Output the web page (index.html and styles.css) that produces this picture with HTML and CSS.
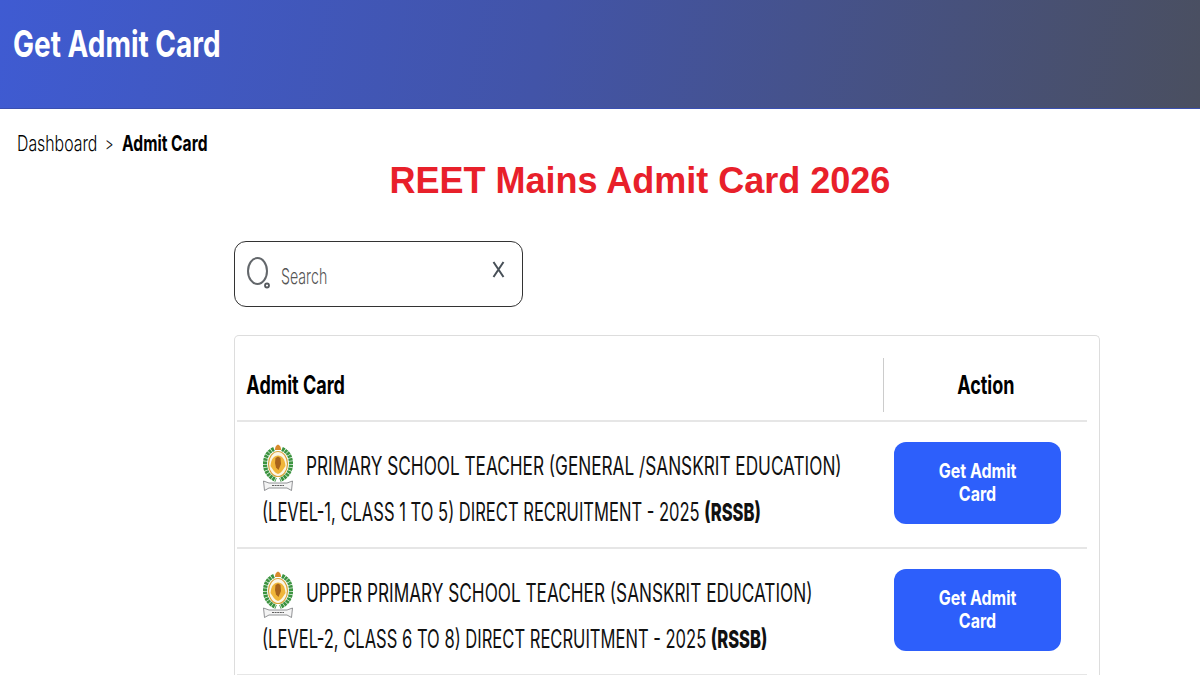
FILE: index.html
```html
<!DOCTYPE html>
<html>

<head>
    <title>Get Admit Card</title>
    <link rel="stylesheet" href="styles.css">
</head>

<body>
<header class="header">
    <div class="header-title squeeze">Get Admit Card</div>
</header>

<nav class="crumbs">
    <span class="crumb squeeze">Dashboard</span>
    <span class="crumb-sep squeeze">&gt;</span>
    <span class="crumb-now squeeze">Admit Card</span>
</nav>

<h1 class="title">REET Mains Admit Card 2026</h1>

<main class="content">
    <div class="search">
        <svg class="search-icon" width="24" height="34" viewBox="0 0 24 34">
            <ellipse cx="10.5" cy="15" rx="9.5" ry="13" fill="none" stroke="#63676b" stroke-width="2"/>
            <circle cx="20" cy="29.5" r="2" fill="none" stroke="#55595d" stroke-width="1.8"/>
        </svg>
        <span class="search-text squeeze">Search</span>
        <svg class="search-clear" width="13" height="17" viewBox="0 0 13 17">
            <path d="M1.5 1 L11.5 16 M11.5 1 L1.5 16" fill="none" stroke="#474f57" stroke-width="2"/>
        </svg>
    </div>

    <div class="card">
        <div class="row head">
            <div class="head-name squeeze">Admit Card</div>
            <div class="head-action"><span class="squeeze">Action</span></div>
        </div>

        <div class="row">
            <div class="name">
                <div class="line first">
                    <svg class="emblem" width="30" height="48" viewBox="0 0 30 48">
                        <use href="#rssb"/>
                    </svg>
                    <span class="squeeze">PRIMARY SCHOOL TEACHER (GENERAL /SANSKRIT EDUCATION)</span>
                </div>
                <div class="line"><span class="squeeze">(LEVEL-1, CLASS 1 TO 5) DIRECT RECRUITMENT - 2025 <b>(RSSB)</b></span></div>
            </div>
            <div class="action"><a class="btn" href="#"><span class="squeeze">Get Admit<br>Card</span></a></div>
        </div>

        <div class="row">
            <div class="name">
                <div class="line first">
                    <svg class="emblem" width="30" height="48" viewBox="0 0 30 48">
                        <use href="#rssb"/>
                    </svg>
                    <span class="squeeze">UPPER PRIMARY SCHOOL TEACHER (SANSKRIT EDUCATION)</span>
                </div>
                <div class="line"><span class="squeeze">(LEVEL-2, CLASS 6 TO 8) DIRECT RECRUITMENT - 2025 <b>(RSSB)</b></span></div>
            </div>
            <div class="action"><a class="btn" href="#"><span class="squeeze">Get Admit<br>Card</span></a></div>
        </div>
    </div>
</main>

<svg width="0" height="0" class="defs">
    <symbol id="rssb" viewBox="0 0 30 48">
        <path d="M11 5 C4 8 2 14 2 20 C2 27 6 33 13 36 M19 5 C26 8 28 14 28 20 C28 27 24 33 17 36" fill="none" stroke="#3c9440" stroke-width="4.2" stroke-dasharray="2.6 .6"/>
        <ellipse cx="15" cy="20" rx="9.5" ry="12.5" fill="#fbf6e6" stroke="#d9a33a" stroke-width="1.2"/>
        <path d="M15 0.5 C12.5 1.5 12 3.5 12 6 H18 C18 3.5 17.5 1.5 15 0.5 Z" fill="#d88a2c"/>
        <path d="M7.5 22 C8 15 11 11.5 15 11.5 C19 11.5 22 15 22.5 22 C20 26 18 29 15 30 C12 29 10 26 7.5 22 Z" fill="#f0b63a"/>
        <path d="M12.5 14 L15 12.5 L17.5 14 L18 20 L15.5 26 L13 23.5 L12 19 Z" fill="#a8641c"/>
        <path d="M0.5 37 L6 39 L24 39 L29.5 37 L28.5 46.5 L24 44 L6 44 L1.5 46.5 Z" fill="#f4f4f4" stroke="#77797c" stroke-width=".8"/>
        <path d="M9 41.5 H21" stroke="#5f5f5f" stroke-width="1.2" stroke-dasharray="2 .6"/>
    </symbol>
</svg>
</body>
</html>
```

FILE: styles.css
```css
* {
    box-sizing: border-box;
}
body, html {
    padding: 0;
    margin: 0;
}
body {
    font-family: Inter, "Open Sans", sans-serif;
    background-color: #fff;
    color: #111;
}
.defs {
    display: block;
    height: 0;
}
/* the shot is squashed sideways, so all the text is too */
.squeeze {
    display: inline-block;
    white-space: nowrap;
    transform: scaleX(0.72);
    transform-origin: left center;
}
.header {
    height: 109px;
    padding: 20px 0 0 13px;
    background: linear-gradient(100deg, #3f5bd2 0%, #4254a8 45%, #4a4f60 100%);
    border-bottom: 1px solid #3a4fb0;
}
.header-title {
    color: #fff;
    font-size: 37px;
    font-weight: 700;
    line-height: 48px;
    transform: scaleX(0.756);
}
.crumbs {
    display: flex;
    align-items: center;
    height: 30px;
    margin-top: 19px;
    padding-left: 17px;
    font-size: 22px;
}
.crumb {
    width: 88px;
    font-weight: 300;
    color: #000;
}
.crumb-sep {
    width: 17px;
    font-size: 18px;
    font-weight: 300;
}
.crumb-now {
    font-weight: 700;
    color: #000;
    transform: scaleX(0.71);
}
.title {
    margin: 2px 0 0;
    padding-left: 80px;
    text-align: center;
    font-family: "Liberation Sans", Arial, sans-serif;
    font-size: 36px;
    line-height: 42px;
    font-weight: 700;
    color: #e8202a;
}
.content {
    width: 866px;
    margin: 39px 0 0 234px;
}
.search {
    display: flex;
    align-items: center;
    width: 289px;
    height: 66px;
    padding: 0 17px 0 12px;
    border: 1px solid #333;
    border-radius: 12px;
}
.search-icon {
    margin: -2px 10px 0 0;
}
.search-text {
    flex: 1;
    margin-top: 3px;
    font-size: 22px;
    font-weight: 300;
    color: #555;
    transform: scaleX(0.645);
}
.search-clear {
    margin-top: -10px;
}
.card {
    height: 340px;
    margin-top: 28px;
    padding: 22px 12px 0 2px;
    border: 1px solid #ddd;
    border-bottom: 0;
    border-radius: 5px 5px 0 0;
    overflow: hidden;
}
.row {
    display: grid;
    grid-template-columns: 646px 1fr;
    height: 127px;
    border-bottom: 2px solid #e6e6e6;
}
.row.head {
    height: 64px;
}
.head-name {
    padding-left: 13px;
    height: 54px;
    line-height: 54px;
    font-size: 25px;
    font-weight: 700;
    color: #000;
}
.head-action {
    height: 54px;
    line-height: 54px;
    text-align: center;
    font-size: 25px;
    font-weight: 700;
    color: #000;
    border-left: 1px solid #ccc;
}
.head-action .squeeze {
    transform-origin: center;
}
.name {
    padding: 21px 0 0 25px;
    font-size: 25px;
    line-height: 46px;
}
.line {
    display: flex;
    align-items: center;
    height: 46px;
}
.line .squeeze {
    transform: scaleX(0.662);
}
.line.first .squeeze {
    transform: scaleX(0.688);
}
.line b {
    font-weight: 800;
}
.emblem {
    flex: none;
    margin: 4px 13px 0 1px;
}
.action {
    padding: 20px 0 0 11px;
}
.btn {
    display: flex;
    align-items: center;
    justify-content: center;
    width: 167px;
    height: 82px;
    background-color: #2d5ffb;
    border-radius: 12px;
    color: #fff;
    text-decoration: none;
    text-align: center;
    font-size: 20px;
    line-height: 23px;
    font-weight: 700;
}
.btn .squeeze {
    transform: scaleX(0.8);
    transform-origin: center;
}
```
